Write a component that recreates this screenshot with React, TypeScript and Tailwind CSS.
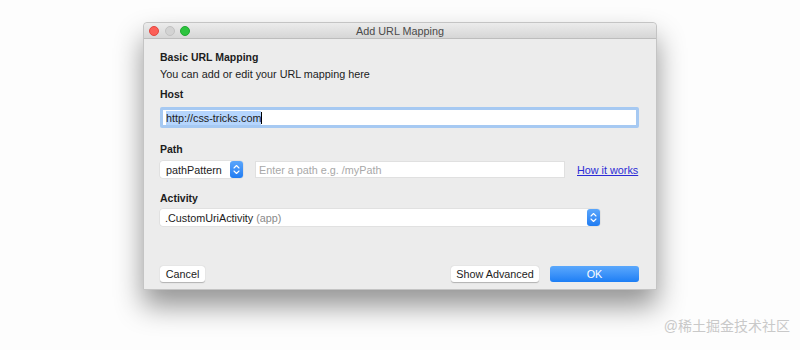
import React from 'react';

const font = { fontFamily: '"Liberation Sans", Arial, sans-serif' };

const Stepper = () => (
  <div className="w-[13px] h-[17px] rounded-[3px] bg-gradient-to-b from-[#5aa6fb] to-[#1f7cf2] flex items-center justify-center shrink-0">
    <svg width="7" height="11" viewBox="0 0 7 11" fill="none">
      <path d="M1 4 L3.5 1.5 L6 4" stroke="white" strokeWidth="1.1" strokeLinecap="round" strokeLinejoin="round" />
      <path d="M1 7 L3.5 9.5 L6 7" stroke="white" strokeWidth="1.1" strokeLinecap="round" strokeLinejoin="round" />
    </svg>
  </div>
);

export default function App() {
  return (
    <div className="relative w-[800px] h-[350px] bg-[#fdfdfd] overflow-hidden text-[10.8px] leading-[14px] text-[#1c1c1c]" style={font}>
      <div className="pl-[143px] pt-[22px]">
        {/* Window */}
        <div className="w-[514px] h-[268px] flex flex-col bg-[#ececec] border border-[#c4c4c4] rounded-t-[4px] shadow-[0_16px_28px_rgba(0,0,0,0.42)]">
          {/* Title bar */}
          <div className="relative h-[16px] shrink-0 flex items-center justify-center bg-gradient-to-b from-[#ececec] to-[#d6d6d6] border-b border-[#bdbdbd] rounded-t-[4px]">
            <div className="absolute left-[5px] top-[3px] flex gap-[5.5px]">
              <span className="w-[10px] h-[10px] rounded-full bg-[#fc5f57] border border-[#e2463f]" />
              <span className="w-[10px] h-[10px] rounded-full bg-[#d3d3d3] border border-[#c2c2c2]" />
              <span className="w-[10px] h-[10px] rounded-full bg-[#2dc43f] border border-[#1faa31]" />
            </div>
            <span className="text-[#4a4a4a]">Add URL Mapping</span>
          </div>

          {/* Content */}
          <div className="flex-1 flex flex-col pl-[16px] pr-[17px] pt-[11px] pb-[7px]">
            <div className="font-bold text-[10.5px]">Basic URL Mapping</div>
            <div className="mt-[3px]">You can add or edit your URL mapping here</div>
            <div className="mt-[6px] font-bold text-[10.5px]">Host</div>
            <div className="mt-[6px] h-[21px] rounded-[2px] border-[3px] border-[#a6c9f2] bg-white flex items-center pl-[3px]">
              <span className="bg-[#b5d5fd]">http://css-tricks.com</span>
              <span className="w-[1px] h-[12px] bg-black" />
            </div>

            <div className="mt-[14px] font-bold text-[10.5px]">Path</div>
            <div className="mt-[5px] flex items-center h-[17px]">
              <div className="w-[83px] h-[17px] bg-white shadow-[0_0_0_0.5px_#d6d6d6] rounded-[3px] flex items-center justify-between pl-[6px]">
                <span>pathPattern</span>
                <Stepper />
              </div>
              <div className="ml-[12px] w-[310px] h-[17px] bg-white border border-[#e0e0e0] flex items-center pl-[3px] text-[#a8a8a8]">
                Enter a path e.g. /myPath
              </div>
              <span className="ml-[12px] text-[#2b2bd6] underline">How it works</span>
            </div>

            <div className="mt-[13px] font-bold text-[10.5px]">Activity</div>
            <div className="mt-[4px] w-[440px] h-[17px] bg-white shadow-[0_0_0_0.5px_#d6d6d6] rounded-[3px] flex items-center justify-between pl-[5px]">
              <span>
                .CustomUriActivity <span className="text-[#8a8a8a]">(app)</span>
              </span>
              <Stepper />
            </div>

            <div className="mt-auto flex items-center">
              <div className="w-[45px] h-[16px] bg-white rounded-[3px] shadow-[0_0.5px_1px_rgba(0,0,0,0.25)] flex items-center justify-center">
                Cancel
              </div>
              <div className="ml-auto w-[88px] h-[16px] bg-white rounded-[3px] shadow-[0_0.5px_1px_rgba(0,0,0,0.25)] flex items-center justify-center">
                Show Advanced
              </div>
              <div className="ml-[11px] w-[89px] h-[16px] rounded-[3px] bg-gradient-to-b from-[#5aa8fc] to-[#1b7ef5] text-white flex items-center justify-center">
                OK
              </div>
            </div>
          </div>
        </div>
      </div>

      {/* Watermark */}
      <div
        className="absolute right-[10px] top-[317px] text-[14px] leading-[18px] text-[#c9c9c9]"
        style={{ fontFamily: '"Liberation Sans", "Noto Sans CJK SC", sans-serif' }}
      >
        @稀土掘金技术社区
      </div>
    </div>
  );
}
